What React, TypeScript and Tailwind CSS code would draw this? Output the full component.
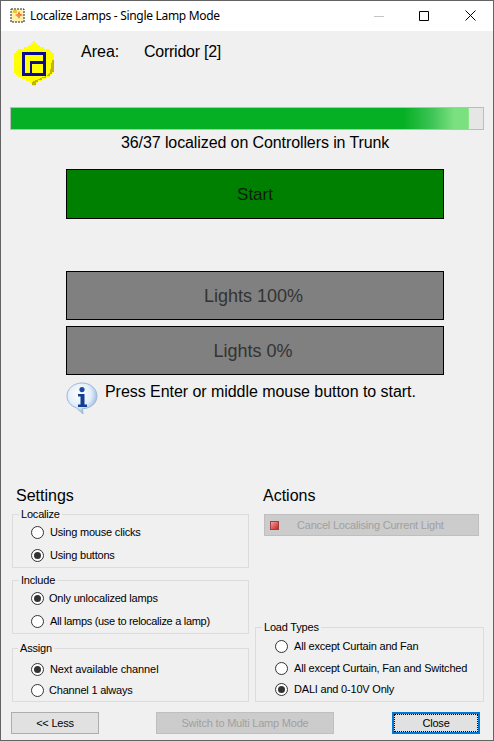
import React, { FC, ReactNode } from "react";

const ui = "font-['Liberation_Sans',sans-serif] text-[11px] leading-[14px] tracking-[-0.2px]";

const TitleIcon: FC = () => (
  <svg width="15" height="15" viewBox="0 0 15 15" className="shrink-0">
    <path d="M1 1h13v13H1z" fill="#fff3a8" stroke="#222" strokeDasharray="2 1" />
    <path d="M3 2h4v3H3z" fill="#f4c430" />
    <path d="M9 3l1 3 3 1-3 1-1 3-1-3-3-1 3-1z" fill="#ee4a1c" />
    <circle cx="8.5" cy="7.5" r="1.8" fill="#ff8a50" />
  </svg>
);

const Logo: FC = () => (
  <svg width="40" height="45" viewBox="14 41 40 45" className="shrink-0" shapeRendering="crispEdges">
    <path d="M32 41h3v2h2v2h3v2h4v2h6v2h2v2h2v20h-2v2h-2v2h-4v2h-4v2h-4v2h-2v3h-4v-3h-2v-2h-4v-2h-4v-2h-4v-2h-2v-2h-2V53h2v-2h2v-2h6v-2h4v-2h3v-2h2z" fill="#ffff00" />
    <path d="M54 60v12h-2v2h-2v2h-4v2h-4v2h-4v2h-2v3h-4v-3l14-6 4-4 2-12z" fill="#c4b400" />
    <rect x="23.500" y="53.500" width="20.500" height="20.500" fill="#ffff00" stroke="#0a0a96" strokeWidth="3" />
    <path d="M31 74V62.500h13" fill="none" stroke="#0a0a96" strokeWidth="2.500" />
  </svg>
);

const InfoIcon: FC = () => (
  <svg width="32" height="33" viewBox="0 0 32 33" className="shrink-0">
    <defs>
      <radialGradient id="bubble" cx="0.42" cy="0.36" r="0.7">
        <stop offset="0" stopColor="#ffffff" />
        <stop offset="0.55" stopColor="#e4eefa" />
        <stop offset="1" stopColor="#7da6d6" />
      </radialGradient>
    </defs>
    <path
      d="M16 1C7.500 1 1 6.800 1 14c0 5.600 3.600 9.800 9 11.600l7 6.400-.6-5.300C25 26.500 31 21 31 14 31 6.800 24.500 1 16 1z"
      fill="url(#bubble)"
      stroke="#9db9da"
    />
    <circle cx="16" cy="7.600" r="2.600" fill="#1a4a9c" />
    <path d="M12 12h6.500v10.500H21V25h-9v-2.500h2.500V14.500H12z" fill="#123f92" />
  </svg>
);

const Radio: FC<{ checked?: boolean; gap: string; children: ReactNode }> = ({ checked, gap, children }) => (
  <div className="flex items-center h-[16px]">
    <span className="w-[13px] h-[13px] rounded-full border border-[#333] bg-white flex items-center justify-center shrink-0">
      {checked && <span className="w-[7px] h-[7px] rounded-full bg-[#333]" />}
    </span>
    <span className={gap}>{children}</span>
  </div>
);

const Group: FC<{ title: string; legendClass: string; className: string; children: ReactNode }> = ({
  title,
  legendClass,
  className,
  children,
}) => (
  <fieldset className={`border border-[#dcdcdc] ${className}`}>
    <legend className={`px-[2px] h-[14px] ${legendClass}`}>{title}</legend>
    {children}
  </fieldset>
);

const BigButton: FC<{ bg: string; text: string; className: string; children: ReactNode }> = ({
  bg,
  text,
  className,
  children,
}) => (
  <button className={`ml-[65px] w-[378px] pt-[1px] border border-black flex items-center justify-center leading-5 ${bg} ${text} ${className}`}>
    {children}
  </button>
);

export default function App() {
  return (
    <div className="w-[494px] h-[741px] border border-[#646464] bg-[#f0f0f0] flex flex-col text-black font-['Liberation_Sans',sans-serif] text-[16px] leading-5 overflow-hidden">
      <div className="h-[30px] bg-white flex items-center shrink-0">
        <div className="ml-[9px] flex items-center gap-[5px] -mt-[1px]">
          <TitleIcon />
          <span className="font-['Noto_Sans',sans-serif] text-[12px] leading-[14px] tracking-[-0.3px]">
            Localize Lamps - Single Lamp Mode
          </span>
        </div>
        <div className="ml-auto flex items-center">
          <svg width="10" height="10" viewBox="0 0 10 10" className="mr-[35px] -mt-[1px]">
            <path d="M0 5.500h10" stroke="#c4c4c4" />
          </svg>
          <svg width="10" height="10" viewBox="0 0 10 10" className="mr-[36px] -mt-[1px]">
            <path d="M.5.500h9v9h-9z" fill="none" stroke="#000" />
          </svg>
          <svg width="11" height="11" viewBox="0 0 11 11" className="mr-[17px] -mt-[1px]">
            <path d="M.5.500l10 10M10.500.500l-10 10" fill="none" stroke="#000" />
          </svg>
        </div>
      </div>

      <div className="pl-[13px] pt-[10px] flex h-[55px] shrink-0">
        <Logo />
        <div className="ml-[27px] mt-[1px] flex">
          <span className="w-[63px]">Area:</span>
          <span className="tracking-[-0.25px]">Corridor [2]</span>
        </div>
      </div>

      <div className="ml-[9px] mt-[21px] w-[474px] h-[23px] border border-[#bcbcbc] bg-[#e6e6e6] shrink-0 flex">
        <div className="w-[458px] border-r border-[#8be88b] bg-[linear-gradient(90deg,#06b025_86%,#3cc455_92%,#7be07f_97%)]" />
      </div>
      <div className="mt-[3px] ml-[120px] h-5 tracking-[-0.1px] shrink-0">36/37 localized on Controllers in Trunk</div>

      <BigButton bg="bg-[#008000]" text="text-[#0c1c0c] text-[17px]" className="mt-[16px] h-[50px] shrink-0">
        Start
      </BigButton>
      <BigButton bg="bg-[#808080]" text="text-[#333333] text-[18px] pr-[3px]" className="mt-[52px] h-[49px] shrink-0">
        Lights 100%
      </BigButton>
      <BigButton bg="bg-[#808080]" text="text-[#333333] text-[18px] pr-[4px]" className="mt-[6px] h-[49px] shrink-0">
        Lights 0%
      </BigButton>

      <div className="ml-[65px] mt-[7px] h-[32px] flex shrink-0">
        <InfoIcon />
        <span className="ml-[7px] tracking-[-0.05px]">Press Enter or middle mouse button to start.</span>
      </div>

      <div className="mt-[71px] flex h-[217px] shrink-0">
        <div className="ml-[11px] w-[237px] flex flex-col">
          <h2 className="ml-[4px] h-[22px] pt-[1px]">Settings</h2>
          <div className={`flex flex-col ${ui}`}>
            <Group title="Localize" legendClass="ml-[6px]" className="h-[61px]">
              <div className="pl-[18px] pt-[3px] flex flex-col gap-[7px]">
                <Radio gap="ml-[6px]">Using mouse clicks</Radio>
                <Radio checked gap="ml-[6px]">Using buttons</Radio>
              </div>
            </Group>
            <Group title="Include" legendClass="ml-[6px]" className="mt-[5px] h-[61px]">
              <div className="pl-[18px] pt-[3px] flex flex-col gap-[7px]">
                <Radio checked gap="ml-[5px]">Only unlocalized lamps</Radio>
                <Radio gap="ml-[6px] tracking-[-0.3px]">All lamps (use to relocalize a lamp)</Radio>
              </div>
            </Group>
            <Group title="Assign" legendClass="ml-[5px]" className="mt-[7px] h-[61px]">
              <div className="pl-[18px] pt-[6px] flex flex-col gap-[5px]">
                <Radio checked gap="ml-[6px] tracking-[-0.1px]">Next available channel</Radio>
                <Radio gap="ml-[5px]">Channel 1 always</Radio>
              </div>
            </Group>
          </div>
        </div>

        <div className={`ml-[6px] w-[229px] flex flex-col ${ui}`}>
          <h2 className="ml-[8px] h-[20px] pt-[1px] text-[16px] leading-5 tracking-normal">Actions</h2>
          <button className="ml-[9px] mt-[9px] w-[215px] h-[22px] bg-[#cccccc] border border-[#bfbfbf] text-[#a0a0a0] flex items-center">
            <span className="ml-[5px] w-[9px] h-[9px] bg-[linear-gradient(135deg,#f4a0a0,#d02020)] border border-[#a04040]" />
            <span className="ml-[18px]">Cancel Localising Current Light</span>
          </button>
          <Group title="Load Types" legendClass="ml-[6px]" className="mt-auto h-[82px]">
            <div className="pl-[19px] pt-[4px] flex flex-col">
              <Radio gap="ml-[6px]">All except Curtain and Fan</Radio>
              <div className="mt-[6px]">
                <Radio gap="ml-[6px]">All except Curtain, Fan and Switched</Radio>
              </div>
              <div className="mt-[5px]">
                <Radio checked gap="ml-[6px]">DALI and 0-10V Only</Radio>
              </div>
            </div>
          </Group>
        </div>
      </div>

      <div className={`mt-[10px] ml-[10px] flex h-[22px] shrink-0 ${ui}`}>
        <button className="w-[88px] bg-[#e1e1e1] border border-[#adadad]">&lt;&lt; Less</button>
        <button className="ml-[57px] w-[178px] bg-[#cccccc] border border-[#bfbfbf] text-[#a0a0a0]">
          Switch to Multi Lamp Mode
        </button>
        <button className="ml-[58px] w-[88px] bg-[#e1e1e1] border-2 border-[#0078d7] flex">
          <span className="flex-1 border border-dotted border-black flex items-center justify-center">Close</span>
        </button>
      </div>
    </div>
  );
}
